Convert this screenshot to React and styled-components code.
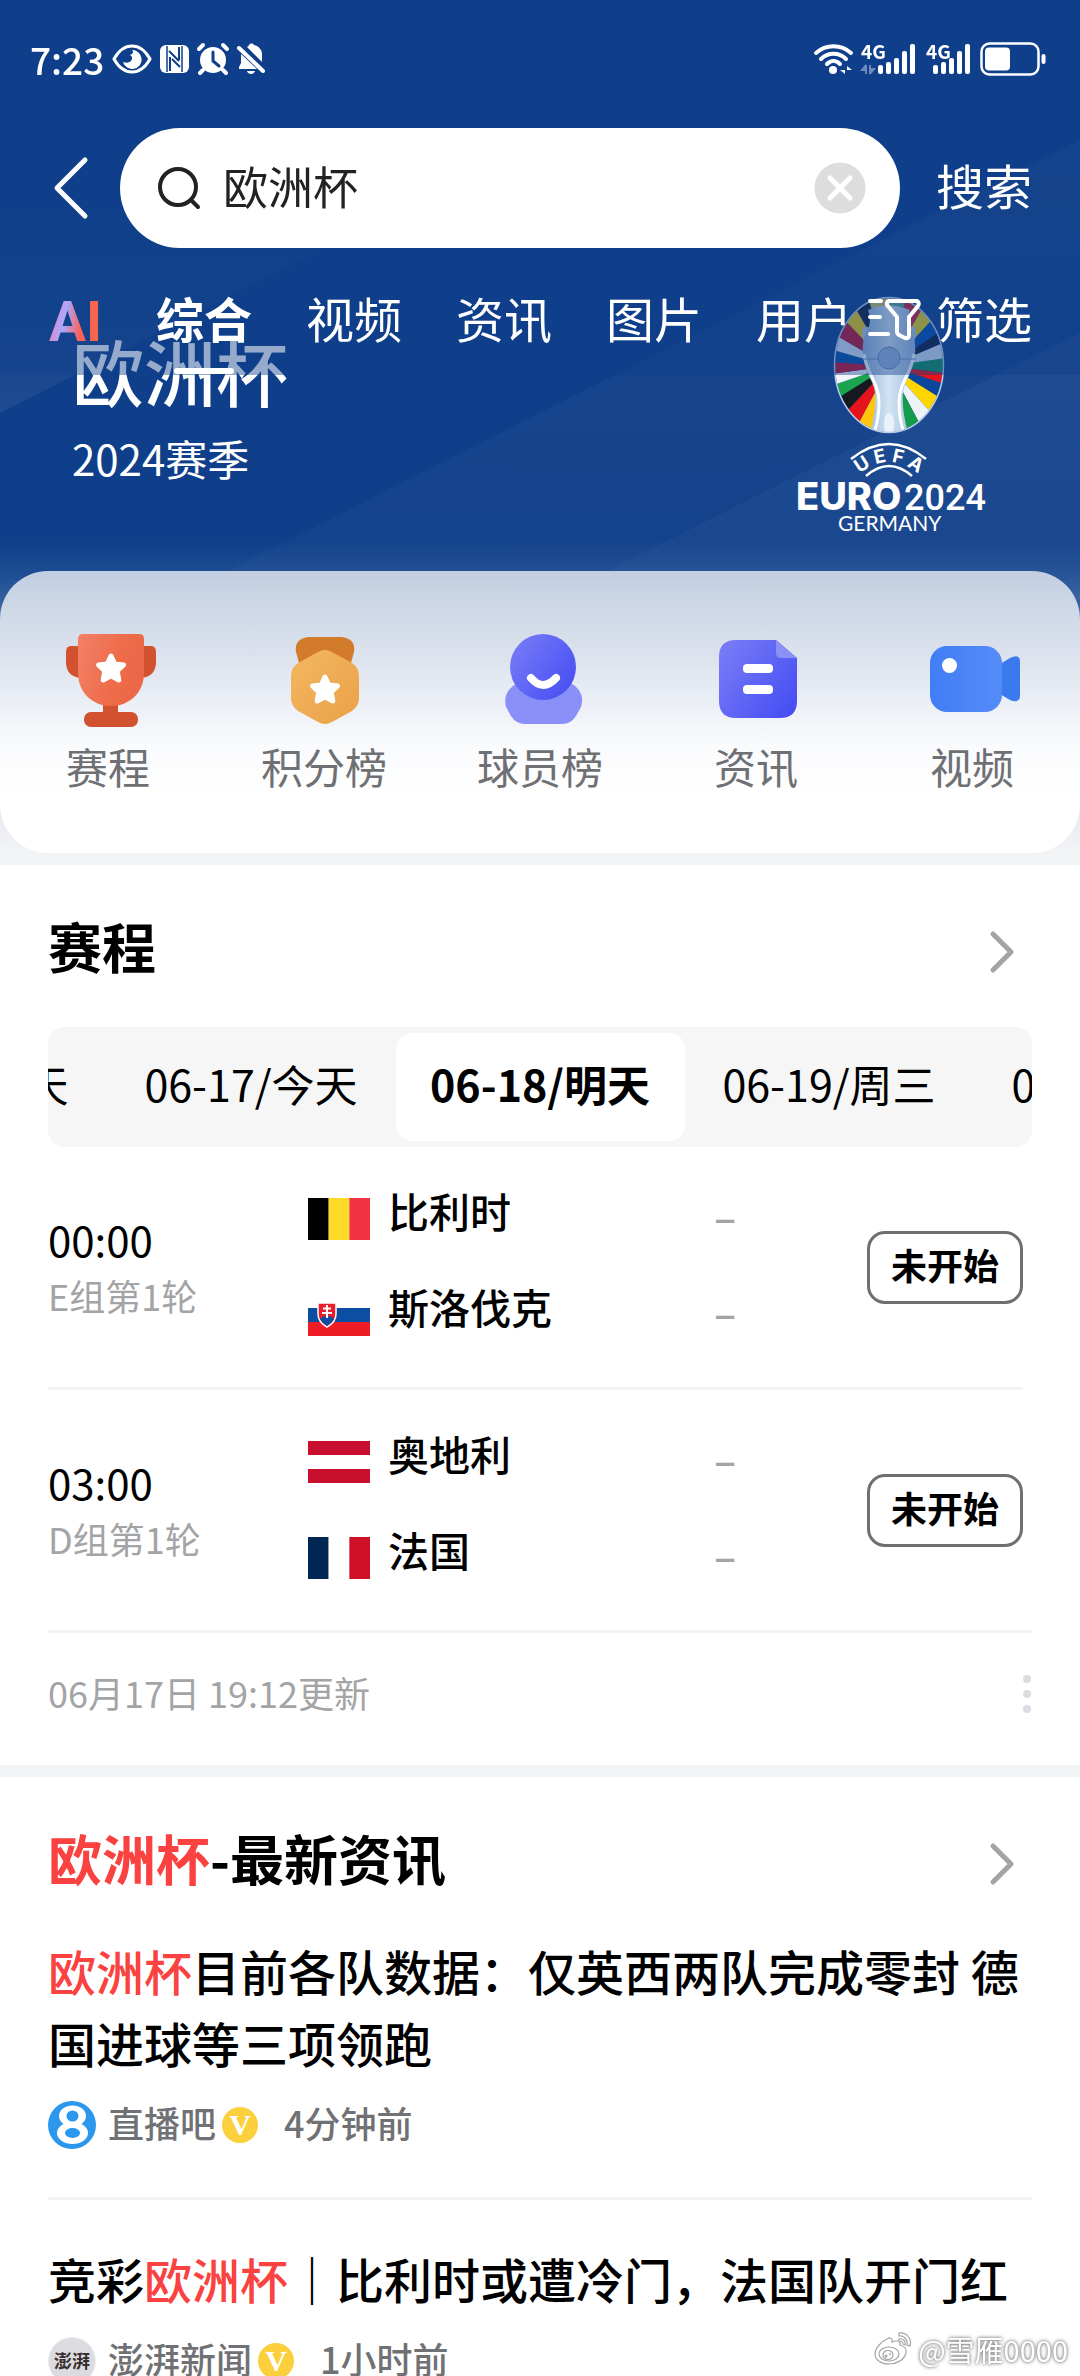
import React, { useState } from 'react';
import styled, { createGlobalStyle } from 'styled-components';

let GlobalStyle = createGlobalStyle`
  * { box-sizing: border-box; }
  body {
    margin: 0;
    background: #fff;
    color: #000;
    font-family: "Noto Sans CJK SC", "Noto Sans", sans-serif;
  }
  button, input { font: inherit; color: inherit; border: 0; padding: 0; background: none; }
  a { color: inherit; text-decoration: none; }
  h1, h2, h3, p, ul { margin: 0; padding: 0; font-weight: 500; }
  ul { list-style: none; }
  svg { display: block; flex: none; overflow: visible; }
`;

let Page = styled.div`
  position: relative;
  height: 100vh;
  overflow: hidden;
`;

/* ---------- top bar ---------- */

let TopBar = styled.header`
  position: fixed;
  top: 0;
  left: 0;
  right: 0;
  z-index: 2;
  color: #fff;
  background: rgba(15, 63, 138, 0.44);
`;

let StatusBar = styled.div`
  display: flex;
  justify-content: space-between;
  align-items: center;
  height: 128px;
  padding: 0 34px 10px 30px;
`;

let StatusGroup = styled.div`
  display: flex;
  align-items: center;
  gap: 8px;
`;

let Clock = styled.span`
  font-size: 37px;
  line-height: 40px;
  font-weight: 500;
`;

let SearchRow = styled.form`
  display: flex;
  align-items: center;
  height: 120px;
  padding: 0 48px;
`;

let BackButton = styled.button`
  width: 72px;
  padding-left: 6px;
`;

let SearchBox = styled.label`
  flex: 1;
  min-width: 0;
  display: flex;
  align-items: center;
  gap: 22px;
  height: 120px;
  padding: 0 34px 0 38px;
  border-radius: 60px;
  background: #fff;
  color: #222;
`;

let SearchInput = styled.input`
  flex: 1;
  min-width: 0;
  height: 72px;
  padding-bottom: 6px;
  font-size: 45px;
  outline: none;
`;

let TextButton = styled.button`
  margin-left: 36px;
  padding-bottom: 9px;
  font-size: 48px;
  line-height: 72px;
`;

let TabRow = styled.nav`
  display: flex;
  align-items: flex-start;
  gap: 15px;
  padding: 33px 48px 1px;
`;

let Tabs = styled.div`
  flex: 1;
  min-width: 0;
  display: flex;
  gap: 54px;
  overflow: hidden;
`;

let Tab = styled.button`
  display: flex;
  flex: none;
  flex-direction: column;
  align-items: center;
  gap: 15px;
  font-size: 48px;
  line-height: 72px;
  font-weight: ${props => props.$active ? 700 : 400};

  &::after {
    content: "";
    width: 60px;
    height: 6px;
    border-radius: 3px;
    background: ${props => props.$active ? '#fff' : 'transparent'};
  }
`;

let AiTab = styled.button`
  flex: none;
  width: 54px;
  height: 72px;
  padding: 5px 0 0 1px;
  text-align: left;
  font-family: Roboto, sans-serif;
  font-size: 55px;
  line-height: 72px;
  font-weight: 700;
  color: transparent;
  background: linear-gradient(100deg, #ff7ab0 8%, #a9a8ff 34%, #ff6058 62%, #f2674a 90%);
  background-clip: text;
  -webkit-background-clip: text;
`;

let FilterButton = styled.button`
  display: flex;
  align-items: center;
  gap: 15px;
  font-size: 48px;
  line-height: 72px;
`;

/* ---------- hero ---------- */

let HeroArea = styled.section`
  position: relative;
  padding-bottom: 12px;
  background: linear-gradient(#0f3f8a 0, #0f3f8a 540px, #1d4d93 575px, #6d8cba 660px, #dfe3ec 790px, #f3f4f6 853px);
`;

let Rays = styled.svg`
  position: absolute;
  top: 0;
  left: 0;
  width: 100%;
  height: 600px;
`;

let Hero = styled.div`
  position: relative;
  display: flex;
  justify-content: space-between;
  padding: 294px 96px 37px 72px;
  color: #fff;
`;

let HeroTitle = styled.h1`
  margin-top: 40px;
  font-size: 72px;
  line-height: 72px;
`;

let Season = styled.p`
  margin-top: 22px;
  font-size: 42px;
  line-height: 60px;
  font-weight: 400;
`;

let Shortcuts = styled.nav`
  position: relative;
  display: grid;
  grid-template-columns: repeat(5, 1fr);
  height: 282px;
  padding-top: 61px;
  border-radius: 48px;
  background: linear-gradient(#c2cee1 0, #d3dce9 20%, #e7ebf3 42%, #fafbfd 62%, #fff 80%);
`;

let Shortcut = styled.a`
  display: flex;
  flex-direction: column;
  align-items: center;
  gap: 8px;
  color: #6f7074;
  font-size: 42px;
  line-height: 60px;
`;

/* ---------- sections ---------- */

let Section = styled.section`
  padding: 0 48px;
  border-bottom: 12px solid #f3f4f6;
`;

let SectionHead = styled.div`
  display: flex;
  align-items: center;
  justify-content: space-between;
  padding: 45px 18px 28px 0;
`;

let SectionTitle = styled.h2`
  padding-bottom: 12px;
  font-size: 54px;
  line-height: 72px;
  font-weight: 700;
`;

let Hit = styled.em`
  font-style: normal;
  color: #fa4240;
`;

let DateTabs = styled.div`
  display: flex;
  justify-content: center;
  margin-top: 5px;
  padding: 6px 0;
  border-radius: 16px;
  background: #f6f6f6;
  overflow: hidden;
`;

let DateTab = styled.button`
  flex: none;
  width: 289px;
  height: 108px;
  padding-bottom: 9px;
  border-radius: 16px;
  font-size: 43px;
  font-weight: ${props => props.$active ? 700 : 400};
  background: ${props => props.$active ? '#fff' : 'transparent'};
`;

let MatchList = styled.ul`
  margin-right: 9px;
`;

let Match = styled.li`
  display: flex;
  align-items: center;
  height: 240px;

  & + & {
    height: 243px;
    border-top: 3px solid #f3f4f4;
  }
`;

let MatchInfo = styled.div`
  width: 260px;
`;

let Time = styled.p`
  font-size: 42px;
  line-height: 56px;
  font-weight: 400;
`;

let Round = styled.p`
  font-size: 36px;
  line-height: 56px;
  font-weight: 400;
  color: #a3a4a6;
`;

let Teams = styled.div`
  flex: 1;
`;

let Team = styled.div`
  display: flex;
  align-items: center;
  gap: 18px;
  height: 96px;
  font-size: 41px;
`;

let TeamName = styled.span`
  flex: 1;
  padding-bottom: 18px;
`;

let Score = styled.span`
  width: 153px;
  padding-bottom: 9px;
  color: #a3a4a6;
`;

let StateButton = styled.button`
  width: 156px;
  height: 73px;
  padding-bottom: 6px;
  border: 3px solid #6e6f72;
  border-radius: 18px;
  font-size: 36px;
  line-height: 60px;
  font-weight: 700;
`;

let UpdateBar = styled.div`
  display: flex;
  align-items: center;
  justify-content: space-between;
  padding: 32px 0 42px;
  border-top: 3px solid #f3f4f4;
  color: #a3a4a6;
`;

let UpdateTime = styled.span`
  padding-bottom: 4px;
  font-size: 36px;
  line-height: 54px;
`;

let Article = styled.article`
  padding-bottom: 48px;

  & + & {
    padding-top: 42px;
    border-top: 3px solid #f2f5f4;
  }
`;

let ArticleTitle = styled.h3`
  font-size: 48px;
  line-height: 72px;
`;

let Meta = styled.div`
  display: flex;
  align-items: center;
  height: 48px;
  margin-top: 23px;
  font-size: 36px;
  font-weight: 500;
  color: #707174;
`;

let Source = styled.span`
  margin: 0 6px 0 12px;
  padding-bottom: 6px;
`;

let Ago = styled.time`
  margin-left: 24px;
  padding-bottom: 6px;
`;

let Watermark = styled.div`
  position: fixed;
  right: 12px;
  bottom: 7px;
  display: flex;
  align-items: center;
  gap: 6px;
  font-size: 29px;
  line-height: 40px;
  color: #fff;
  text-shadow: 0 0 3px #777, 0 0 4px #999;
`;

/* ---------- status icons ---------- */

function EyeIcon(){
  return (
    <svg width="40" height="30" viewBox="0 0 40 30">
      <path d="M2 15C7 6 13 2 20 2s13 4 18 13c-5 9-11 13-18 13S7 24 2 15z" fill="none" stroke="#fff" strokeWidth="3" />
      <path d="M20 6a9.500 9.500 0 1 1-9 12c3 1 6 1 8-1 2-3 1-5-1-6 3-1 4-3 2-5z" fill="#fff" />
    </svg>
  )
}

function NfcIcon(){
  return (
    <svg width="29" height="30" viewBox="0 0 29 30">
      <rect x="0" y="1" width="29" height="28" rx="6" fill="#fff" />
      <path d="M7 2v26M22 2v26" stroke="#0f3f8a" strokeWidth="1.500" />
      <path d="M9 7l10 10M10 13v14M19 3v13M12 15l8 8" stroke="#0f3f8a" strokeWidth="2" />
    </svg>
  )
}

function AlarmIcon(){
  return (
    <svg width="32" height="32" viewBox="0 0 32 32">
      <circle cx="16" cy="17" r="13" fill="#fff" />
      <path d="M2 6l4-4M30 6l-4-4M6 27l-3 3M26 27l3 3" stroke="#fff" strokeWidth="4" strokeLinecap="round" />
      <path d="M16 9v9l6 5" fill="none" stroke="#0f3f8a" strokeWidth="3" strokeLinecap="round" />
    </svg>
  )
}

function MuteIcon(){
  return (
    <svg width="28" height="32" viewBox="0 0 28 32">
      <path d="M10 4c1-1 2-1 2-2 1-2 4-2 5 0 5 1 8 5 8 9v8z" fill="#fff" />
      <path d="M4 11l16 15H2v-2l2-4z" fill="#fff" />
      <path d="M10 28h8c-1 4-7 4-8 0z" fill="#fff" />
      <path d="M2 5l24 23" stroke="#fff" strokeWidth="4" strokeLinecap="round" />
    </svg>
  )
}

function WifiIcon(){
  return (
    <svg width="39" height="32" viewBox="0 0 39 32">
      <g fill="none" stroke="#fff" strokeWidth="4" strokeLinecap="round">
        <path d="M2 10c10-9 25-9 35 0" />
        <path d="M7 16c7-7 18-7 25 0" />
        <path d="M13 21c4-4 9-4 13 0" />
      </g>
      <circle cx="19" cy="27" r="4" fill="#fff" />
      <path d="M31 23v8l-5-4h5M33 31v-8l5 4h-5" fill="#fff" />
    </svg>
  )
}

function SignalIcon(props){
  return (
    <svg width={props.data ? 57 : 46} height="32" viewBox={props.data ? '0 0 57 32' : '0 0 46 32'}>
      <text x="0" y="16" fontSize="19" fontWeight="700" fontFamily="Noto Sans CJK SC, sans-serif" fill="#fff">4G</text>
      {
        props.data
        ? <path d="M5 22v9M5 22l-4 5h4M9 31v-9M9 31l4-5H9" stroke="#6c8ac0" strokeWidth="2" fill="#6c8ac0" />
        : null
      }
      {
        [9, 12, 16, 23, 30].map((h, i) => (
          <rect key={i} x={(props.data ? 17 : 7) + i * 8} y={31 - h} width="5" height={h} rx="2" fill="#fff" />
        ))
      }
    </svg>
  )
}

function BatteryIcon(){
  return (
    <svg width="66" height="34" viewBox="0 0 66 34">
      <rect x="1.500" y="1.500" width="57" height="31" rx="8" fill="none" stroke="#fff" strokeWidth="2.500" />
      <rect x="5" y="5.500" width="25" height="23" rx="4" fill="#fff" />
      <rect x="61.500" y="12" width="4" height="10" rx="2" fill="#fff" />
    </svg>
  )
}

/* ---------- shortcut icons ---------- */

function Star(props){
  return (
    <path
      transform={`translate(${props.x} ${props.y})`}
      d="M0-13L3.800-5 12.500-4 6.200 2 7.800 11 0 6.800-7.800 11-6.200 2-12.500-4-3.800-5z"
      fill="#fff" stroke="#fff" strokeWidth="5" strokeLinejoin="round"
    />
  )
}

function TrophyIcon(){
  return (
    <svg width="96" height="96" viewBox="0 0 96 96">
      <defs>
        <linearGradient id="cup" x1="0" y1="0.200" x2="1" y2="0.500">
          <stop offset="0" stopColor="#f27f66" /><stop offset="0.600" stopColor="#ee6c49" /><stop offset="1" stopColor="#ea6848" />
        </linearGradient>
      </defs>
      <path d="M20 14h-9q-5 0-5 6v10q0 14 14 16zM82 14h9q5 0 5 6v10q0 14-14 16z" fill="#d2512e" />
      <rect x="43" y="70" width="15" height="14" fill="#d2512e" />
      <rect x="24" y="80" width="54" height="15" rx="7" fill="#d2512e" />
      <path d="M23 2h56q5 0 5 5v34c0 20-15 33-33 33S18 61 18 41V7q0-5 5-5z" fill="url(#cup)" />
      <Star x={51} y={37} />
    </svg>
  )
}

function MedalIcon(){
  return (
    <svg width="96" height="96" viewBox="0 0 96 96">
      <defs>
        <linearGradient id="medal" x1="0" y1="0" x2="1" y2="1">
          <stop offset="0" stopColor="#f2b760" /><stop offset="1" stopColor="#eba149" />
        </linearGradient>
      </defs>
      <path d="M32 5h34q14 2 12 15l-5 18H25l-5-18Q18 7 32 5z" fill="#d27c2b" />
      <path d="M42 20q7-4 14 0l20 11q7 5 7 13v22q0 8-7 13L56 90q-7 4-14 0L22 79q-7-5-7-13V44q0-8 7-13z" fill="url(#medal)" />
      <Star x={49} y={58} />
    </svg>
  )
}

function PlayerIcon(){
  return (
    <svg width="96" height="96" viewBox="0 0 96 96">
      <defs>
        <linearGradient id="violet" x1="0" y1="0.200" x2="1" y2="0.900">
          <stop offset="0" stopColor="#767af7" /><stop offset="1" stopColor="#454df2" />
        </linearGradient>
      </defs>
      <path d="M27 50h50q17 9 12 25l-5 9q-5 8-14 8H33q-9 0-14-8l-5-9q-4-16 13-25z" fill="#8b8ff8" />
      <circle cx="51" cy="35" r="33" fill="url(#violet)" />
      <path d="M39 46q12 14 25 0" fill="none" stroke="#fff" strokeWidth="8" strokeLinecap="round" />
    </svg>
  )
}

function NewsIcon(){
  return (
    <svg width="96" height="96" viewBox="0 0 96 96">
      <path d="M28 8h40l21 18v43q0 17-17 17H28q-17 0-17-17V25Q11 8 28 8z" fill="url(#violet)" />
      <path d="M68 8l21 18H73q-5 0-5-5z" fill="#8b8ff8" />
      <rect x="35" y="32" width="30" height="9" rx="4" fill="#fff" />
      <rect x="35" y="53" width="30" height="9" rx="4" fill="#fff" />
    </svg>
  )
}

function VideoIcon(){
  return (
    <svg width="96" height="96" viewBox="0 0 96 96">
      <defs>
        <linearGradient id="video" x1="0" y1="0" x2="1" y2="0">
          <stop offset="0" stopColor="#417df5" /><stop offset="1" stopColor="#548cf7" />
        </linearGradient>
      </defs>
      <path d="M76 32l10-6q10-5 10 4v33q0 9-10 5l-10-6z" fill="#3b79ee" />
      <rect x="6" y="14" width="72" height="66" rx="17" fill="url(#video)" />
      <circle cx="25.500" cy="33.500" r="7.500" fill="#fff" />
    </svg>
  )
}

/* ---------- tournament emblem ---------- */

// [from angle, to angle, colour], clockwise from the right
let wedges = [
  [-8, 7, '#14935f'], [7, 18, '#e5141c'], [18, 32, '#0a479c'], [32, 48, '#ffd500'],
  [48, 62, '#eef3f8'], [62, 80, '#159b4c'], [80, 104, '#bcd3ea'], [104, 118, '#ffc40c'],
  [118, 133, '#e5141c'], [133, 148, '#16191f'], [148, 161, '#18a54e'], [161, 172, '#f2f6fb'],
  [172, 184, '#c8122d'], [184, 196, '#0b50a8'], [196, 210, '#d7e3f5'], [210, 226, '#c0172f'],
  [226, 240, '#f0cf10'], [240, 253, '#16223d'], [253, 270, '#c9c16c'], [270, 284, '#5fa795'],
  [284, 300, '#d5233c'], [300, 313, '#ebd41a'], [313, 326, '#0a50b0'], [326, 337, '#14213f'],
  [337, 352, '#d2e0f2'],
];

function point(deg){
  let r = deg * Math.PI / 180;
  return `${(97 + 90 * Math.cos(r)).toFixed(1)} ${(72 + 90 * Math.sin(r)).toFixed(1)}`;
}

function Emblem(){
  return (
    <svg width="192" height="240" viewBox="0 0 192 240" role="img" aria-label="UEFA EURO2024 GERMANY">
      <defs>
        <clipPath id="oval"><ellipse cx="97" cy="71" rx="54" ry="67" /></clipPath>
        <linearGradient id="silver" x1="0" y1="0" x2="1" y2="0">
          <stop offset="0" stopColor="#93b3da" /><stop offset="0.500" stopColor="#d3e4f2" /><stop offset="1" stopColor="#9bbbe0" />
        </linearGradient>
        <path id="arch" d="M62 185Q97 151 132 185" />
      </defs>
      <g clipPath="url(#oval)">
        {
          wedges.map(([from, to, fill]) => (
            <path key={from} d={`M97 72L${point(from)}L${point(to)}z`} fill={fill} />
          ))
        }
        <path d="M77 36q-8-6-3 13M117 36q8-6 3 13" fill="none" stroke="#b4cbe6" strokeWidth="4" />
        <path d="M76 16q21-9 42 0c-4 12-1 17 2 23 7 16 2 34-6 49-6 13-3 32 2 51H78c5-19 8-38 2-51-8-15-13-33-6-49 3-6 6-11 2-23z" fill="url(#silver)" />
        <path d="M72 60c2 18 15 29 15 48q0 17-5 31M122 60c-2 18-15 29-15 48q0 17 5 31" fill="none" stroke="#fff" strokeWidth="3" />
        <path d="M93 139q-3-19 4-20 7 1 4 20z" fill="#eaf3fa" />
        <path d="M70 65h54" stroke="#7392c2" strokeWidth="1" />
        <circle cx="97" cy="64" r="11" fill="#9db8dc" stroke="#6f8fc2" />
      </g>
      <ellipse cx="97" cy="71" rx="54.500" ry="67.500" fill="none" stroke="#b9cde8" strokeWidth="1.500" />
      <path d="M59 165Q97 135 134 165M74 182Q97 162 120 182" fill="none" stroke="#fff" strokeWidth="2.500" />
      <g fill="#fff" fontFamily="Inter, sans-serif">
        <text fontSize="19" fontWeight="700" textAnchor="middle">
          <textPath href="#arch" startOffset="50%">U E F A</textPath>
        </text>
        <text x="4" y="216" fontSize="38" fontWeight="800">EURO</text>
        <text x="112" y="216" fontSize="36" fontWeight="500" fontFamily="Roboto, sans-serif">2024</text>
        <text x="46" y="237" fontSize="21" fontWeight="400" fontFamily="Lato, sans-serif">GERMANY</text>
      </g>
    </svg>
  )
}

/* ---------- flags ---------- */

function Flag(props){
  let { stripes, vertical, shield } = props;
  return (
    <svg width="62" height="42" viewBox="0 0 62 42">
      {
        stripes.map((fill, i) => (
          vertical
          ? <rect key={i} x={i * 62 / 3} y="0" width={62 / 3} height="42" fill={fill} />
          : <rect key={i} x="0" y={i * 14} width="62" height="14" fill={fill} />
        ))
      }
      {
        shield
        ? <g>
            <path d="M10 9h18v11q0 8-9 13-9-5-9-13z" fill="#e8202b" stroke="#fff" strokeWidth="1.500" />
            <path d="M12 25q3-4 7-2 4-2 7 2-2 4-7 7-5-3-7-7z" fill="#0b4ea2" />
            <path d="M19 11v13M15 14.500h8M14 19h10" stroke="#fff" strokeWidth="2" />
          </g>
        : null
      }
    </svg>
  )
}

let flags = {
  比利时: <Flag vertical stripes={['#000', '#fdda25', '#ef3340']} />,
  斯洛伐克: <Flag shield stripes={['#fff', '#0b4ea2', '#ee1c25']} />,
  奥地利: <Flag stripes={['#c8102e', '#fff', '#c8102e']} />,
  法国: <Flag vertical stripes={['#002654', '#fff', '#ce1126']} />,
};

function Chevron(){
  return (
    <svg width="24" height="42" viewBox="0 0 24 42">
      <path d="M3 3l18 18L3 39" fill="none" stroke="#a3a4a6" strokeWidth="5" strokeLinecap="round" strokeLinejoin="round" />
    </svg>
  )
}

function Verified(){
  return (
    <svg width="38" height="36" viewBox="0 0 38 36">
      <circle cx="18" cy="18" r="18" fill="#fcd03c" />
      <text x="18" y="28" textAnchor="middle" fontSize="30" fontWeight="700" fontFamily="Liberation Serif, serif" fill="#fff">V</text>
    </svg>
  )
}

function ZhiboAvatar(){
  return (
    <svg width="48" height="48" viewBox="0 0 48 48">
      <circle cx="24" cy="24" r="24" fill="#2b98ee" />
      <ellipse cx="24.500" cy="15" rx="13.500" ry="10.500" fill="#fff" />
      <ellipse cx="24.500" cy="32" rx="15.500" ry="11" fill="#fff" />
      <ellipse cx="24.500" cy="15" rx="6" ry="5.500" fill="#2b98ee" />
      <ellipse cx="24.500" cy="32" rx="7.500" ry="5" fill="#2b98ee" />
    </svg>
  )
}

function PengpaiAvatar(){
  return (
    <svg width="48" height="48" viewBox="0 0 48 48">
      <circle cx="24" cy="24" r="23.500" fill="#dcdce0" stroke="#ececee" />
      <text x="24" y="31" textAnchor="middle" fontSize="18" fontWeight="700" fontFamily="Noto Sans CJK SC, sans-serif" fill="#3a3030">澎湃</text>
    </svg>
  )
}

function WeiboIcon(){
  return (
    <svg width="38" height="34" viewBox="0 0 38 34">
      <g fill="#fff" stroke="#a5a5a5" strokeWidth="1.200">
        <path d="M13 7c3-2 6-1 5 3 5-2 9-1 8 3 4 1 7 4 6 8-2 7-9 11-17 11S1 28 1 22C1 16 8 9 13 7z" />
        <path d="M25 1c8-1 13 6 11 13l-3-1c1-5-3-10-8-9z" />
        <path d="M25 7c4-1 7 2 6 6l-2-1c0-2-2-3-4-3z" />
        <ellipse cx="15" cy="22" rx="10" ry="7" />
        <ellipse cx="14" cy="23" rx="5" ry="4.500" />
      </g>
      <circle cx="12" cy="24" r="1.500" fill="#a5a5a5" />
      <circle cx="16" cy="22" r="1" fill="#a5a5a5" />
    </svg>
  )
}

/* ---------- data ---------- */

let tabs = ['综合', '视频', '资讯', '图片', '用户'];

let shortcuts = [
  { name: '赛程', icon: <TrophyIcon /> },
  { name: '积分榜', icon: <MedalIcon /> },
  { name: '球员榜', icon: <PlayerIcon /> },
  { name: '资讯', icon: <NewsIcon /> },
  { name: '视频', icon: <VideoIcon /> },
];

let dates = ['06-16/昨天', '06-17/今天', '06-18/明天', '06-19/周三', '06-20/周四'];

let matches = [
  { time: '00:00', round: 'E组第1轮', teams: ['比利时', '斯洛伐克'] },
  { time: '03:00', round: 'D组第1轮', teams: ['奥地利', '法国'] },
];

function App(){

  let [keyword, setKeyword] = useState('欧洲杯');
  let [tab, setTab] = useState('综合');
  let [date, setDate] = useState('06-18/明天');

  return (
    <Page>
      <GlobalStyle />

      <TopBar>
        <StatusBar>
          <StatusGroup>
            <Clock>7:23</Clock>
            <EyeIcon />
            <NfcIcon />
            <AlarmIcon />
            <MuteIcon />
          </StatusGroup>
          <StatusGroup>
            <WifiIcon />
            <SignalIcon data />
            <SignalIcon />
            <BatteryIcon />
          </StatusGroup>
        </StatusBar>

        <SearchRow onSubmit={e => e.preventDefault()}>
          <BackButton type="button" aria-label="返回">
            <svg width="34" height="62" viewBox="0 0 34 62">
              <path d="M31 3L3 31l28 28" fill="none" stroke="#fff" strokeWidth="5" strokeLinecap="round" strokeLinejoin="round" />
            </svg>
          </BackButton>
          <SearchBox>
            <svg width="43" height="43" viewBox="0 0 43 43">
              <circle cx="20" cy="20" r="18" fill="none" stroke="#222" strokeWidth="4" />
              <path d="M33 33l7 7" stroke="#222" strokeWidth="4" strokeLinecap="round" />
            </svg>
            <SearchInput aria-label="搜索" value={keyword} onChange={e => setKeyword(e.target.value)} />
            <button type="button" aria-label="清空" onClick={() => setKeyword('')}>
              <svg width="52" height="52" viewBox="0 0 52 52">
                <circle cx="26" cy="26" r="25.500" fill="#ddd" />
                <path d="M16 16l20 20M36 16L16 36" stroke="#fff" strokeWidth="5" strokeLinecap="round" />
              </svg>
            </button>
          </SearchBox>
          <TextButton>搜索</TextButton>
        </SearchRow>

        <TabRow>
          <Tabs>
            <AiTab>AI</AiTab>
            {
              tabs.map(name => (
                <Tab key={name} $active={name === tab} onClick={() => setTab(name)}>{name}</Tab>
              ))
            }
          </Tabs>
          <FilterButton>
            <svg width="54" height="38" viewBox="0 0 54 38">
              <g fill="none" stroke="#fff" strokeWidth="4" strokeLinecap="round" strokeLinejoin="round">
                <path d="M3 3h11M3 19h10M3 36h18" />
                <path d="M22 3h28q3 2 1 5L42 19v18q0 4-4 3l-6-3q-2-1-2-4V19L20 7q-1-3 2-4z" />
              </g>
            </svg>
            筛选
          </FilterButton>
        </TabRow>
      </TopBar>

      <HeroArea>
        <Rays viewBox="0 0 1080 600" preserveAspectRatio="none">
          <defs>
            <linearGradient id="ray" x1="0" y1="0" x2="0" y2="1">
              <stop offset="0" stopColor="#fff" stopOpacity="0" />
              <stop offset="1" stopColor="#fff" stopOpacity="0.060" />
            </linearGradient>
            <linearGradient id="rayFade" x1="0" y1="0" x2="0" y2="1">
              <stop offset="0" stopColor="#fff" stopOpacity="0.040" />
              <stop offset="1" stopColor="#fff" stopOpacity="0.020" />
            </linearGradient>
          </defs>
          <path d="M0 200H420L0 413z" fill="url(#ray)" />
          <path d="M1080 140V600H170z" fill="url(#rayFade)" />
          <path d="M1080 333V600H550z" fill="url(#rayFade)" />
        </Rays>
        <Hero>
          <div>
            <HeroTitle>欧洲杯</HeroTitle>
            <Season>2024赛季</Season>
          </div>
          <Emblem />
        </Hero>
        <Shortcuts>
          {
            shortcuts.map(a => (
              <Shortcut key={a.name} href="#">
                {a.icon}
                {a.name}
              </Shortcut>
            ))
          }
        </Shortcuts>
      </HeroArea>

      <Section>
        <SectionHead>
          <SectionTitle>赛程</SectionTitle>
          <a href="#" aria-label="全部赛程"><Chevron /></a>
        </SectionHead>
        <DateTabs>
          {
            dates.map(d => (
              <DateTab key={d} $active={d === date} onClick={() => setDate(d)}>{d}</DateTab>
            ))
          }
        </DateTabs>
        <MatchList>
          {
            matches.map(m => (
              <Match key={m.time}>
                <MatchInfo>
                  <Time>{m.time}</Time>
                  <Round>{m.round}</Round>
                </MatchInfo>
                <Teams>
                  {
                    m.teams.map(name => (
                      <Team key={name}>
                        {flags[name]}
                        <TeamName>{name}</TeamName>
                        <Score>–</Score>
                      </Team>
                    ))
                  }
                </Teams>
                <StateButton>未开始</StateButton>
              </Match>
            ))
          }
        </MatchList>
        <UpdateBar>
          <UpdateTime>06月17日 19:12更新</UpdateTime>
          <button aria-label="更多">
            <svg width="10" height="38" viewBox="0 0 10 38">
              <g fill="#dcdde2">
                <circle cx="5" cy="4" r="4" />
                <circle cx="5" cy="19" r="4" />
                <circle cx="5" cy="34" r="4" />
              </g>
            </svg>
          </button>
        </UpdateBar>
      </Section>

      <Section>
        <SectionHead>
          <SectionTitle><Hit>欧洲杯</Hit>-最新资讯</SectionTitle>
          <a href="#" aria-label="全部资讯"><Chevron /></a>
        </SectionHead>
        <Article>
          <ArticleTitle>
            <a href="#"><Hit>欧洲杯</Hit>目前各队数据：仅英西两队完成零封 德国进球等三项领跑</a>
          </ArticleTitle>
          <Meta>
            <ZhiboAvatar />
            <Source>直播吧</Source>
            <Verified />
            <Ago>4分钟前</Ago>
          </Meta>
        </Article>
        <Article>
          <ArticleTitle>
            <a href="#">竞彩<Hit>欧洲杯</Hit>｜比利时或遭冷门，法国队开门红</a>
          </ArticleTitle>
          <Meta>
            <PengpaiAvatar />
            <Source>澎湃新闻</Source>
            <Verified />
            <Ago>1小时前</Ago>
          </Meta>
        </Article>
      </Section>

      <Watermark>
        <WeiboIcon />
        @雪雁0000
      </Watermark>
    </Page>
  )
}

export default App;
